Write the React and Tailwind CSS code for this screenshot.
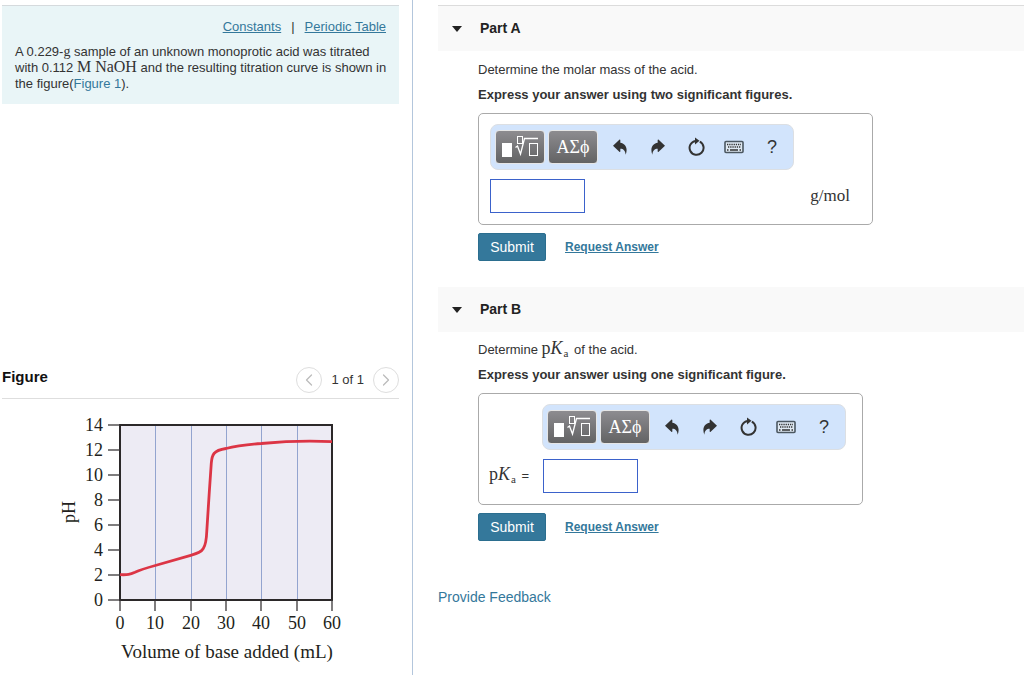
import { useState } from 'react';
import { ChevronLeft, ChevronRight } from 'lucide-react';

const X_TICKS = [0, 10, 20, 30, 40, 50, 60];
const Y_TICKS = [0, 2, 4, 6, 8, 10, 12, 14];

// plot area inside the chart svg
const LEFT = 80;
const RIGHT = 292;
const TOP = 20;
const BOTTOM = 195;

const xPos = (value) => Math.round(LEFT + (value / 60) * (RIGHT - LEFT));
const yPos = (value) => Math.round(BOTTOM - (value / 14) * (BOTTOM - TOP));

function TitrationChart() {
  return (
    <svg width="320" height="264" viewBox="0 0 320 264" className="block font-['Liberation_Serif',serif] text-[18px]" fill="#231f20">
      <title>Titration curve</title>
      <rect x={LEFT} y={TOP} width={RIGHT - LEFT} height={BOTTOM - TOP} fill="#edebf4" />
      {X_TICKS.slice(1, -1).map((tick) => (
        <line key={tick} x1={xPos(tick) + 0.5} x2={xPos(tick) + 0.5} y1={TOP} y2={BOTTOM} stroke="#93a4cf" />
      ))}
      <rect x={LEFT} y={TOP} width={RIGHT - LEFT} height={BOTTOM - TOP} fill="none" stroke="#2b2829" strokeWidth="2" />
      {X_TICKS.map((tick) => (
        <g key={tick}>
          <line x1={xPos(tick)} x2={xPos(tick)} y1={BOTTOM} y2={BOTTOM + 11} stroke="#3a3738" strokeWidth="1.3" />
          <text x={xPos(tick)} y="224" textAnchor="middle">{tick}</text>
        </g>
      ))}
      {Y_TICKS.map((tick) => (
        <g key={tick}>
          <line x1={LEFT - 12} x2={LEFT} y1={yPos(tick)} y2={yPos(tick)} stroke="#3a3738" strokeWidth="1.3" />
          <text x="63" y={yPos(tick) + 6} textAnchor="end">{tick}</text>
        </g>
      ))}
      <path
        d="M80 169.7C88 170 90 169.5 95 167.3C101 164.5 107 162.8 115.3 160.5L150.700 150.300C157 148.500 161 147.500 163.300 143.500C166 139.500 166.500 134 166.800 126L169.300 87L171.300 58C172 50 173 45.500 186 43.500C197 40.500 207 39.500 221.300 38.500C245 36.300 268 35.500 292 36.700"
        fill="none"
        stroke="#dc3545"
        strokeWidth="2.8"
      />
      <text x="187" y="253" textAnchor="middle" className="text-[19px]">Volume of base added (mL)</text>
      <text transform="translate(35 107) rotate(-90)" textAnchor="middle">pH</text>
    </svg>
  );
}

function TemplateIcon() {
  return (
    <svg width="38" height="24" viewBox="0 0 38 24" fill="none" stroke="white">
      <rect x="1" y="8" width="10" height="14" fill="white" stroke="none" />
      <rect x="16.5" y="1.5" width="5" height="7" />
      <path d="M14.5 12.5L16.5 11L19.5 19L23.5 3.5H37" strokeWidth="1.3" />
      <rect x="28.5" y="8.5" width="8" height="12" />
    </svg>
  );
}

function ArrowIcon({ flip }) {
  return (
    <svg width="14" height="16" viewBox="0 0 42 48" className={flip ? '-scale-x-100' : ''} fill="#333">
      <path d="M0 20L19 2C21 1 22 2 22 4V11C36 13 46 26 38 47C37 34 31 29 22 29V37C22 39 21 40 19 38Z" />
    </svg>
  );
}

function ResetIcon() {
  return (
    <svg width="18" height="20" viewBox="0 0 18 20" fill="none">
      <path d="M12.8 4.6A7 7 0 1 1 8.5 3.9" stroke="#333" strokeWidth="2" />
      <path d="M8 0.5L12.5 3.8L8 7.5Z" fill="#333" />
    </svg>
  );
}

function KeyboardIcon() {
  return (
    <svg width="20" height="14" viewBox="0 0 20 14" fill="none">
      <rect x="1" y="1.5" width="18" height="11" rx="1" fill="#dfe9f3" stroke="#4b5761" strokeWidth="1.6" />
      <path d="M3 4.5H17M4 7H17" stroke="#333" strokeWidth="1.4" strokeDasharray="1.3 0.9" />
      <path d="M3 10H4.5M6 10H14M15.5 10H17" stroke="#333" strokeWidth="1.3" />
    </svg>
  );
}

function Toolbar({ className = '' }) {
  const dark =
    'flex h-[34px] w-[50px] items-center justify-center rounded border border-[#e6e6e6] bg-linear-to-b from-[#8d8c90] to-[#636364] text-white';
  const plain = 'flex h-8 w-[38px] items-center justify-center text-[#333]';

  return (
    <div className={`flex h-[46px] w-[304px] items-center rounded-lg border border-[#dcdfe3] bg-[#d2e4fc] pl-[4px] ${className}`}>
      <button type="button" aria-label="Templates" className={dark}>
        <TemplateIcon />
      </button>
      <button type="button" aria-label="Symbols" className={`${dark} mx-[3px] font-['Liberation_Serif',serif] text-[18px]`}>
        ΑΣϕ
      </button>
      <button type="button" aria-label="Undo" className={plain}>
        <ArrowIcon />
      </button>
      <button type="button" aria-label="Redo" className={plain}>
        <ArrowIcon flip />
      </button>
      <button type="button" aria-label="Reset" className={plain}>
        <ResetIcon />
      </button>
      <button type="button" aria-label="Keyboard shortcuts" className={plain}>
        <KeyboardIcon />
      </button>
      <button type="button" aria-label="Help" className={`${plain} text-[18px]`}>
        ?
      </button>
    </div>
  );
}

function PKa() {
  return (
    <span className="mr-[2px] font-['Liberation_Serif',serif] text-[18px] leading-3">
      p<i>K</i>
      <sub className="ml-px text-[11px] leading-3">a</sub>
    </span>
  );
}

function PartHeader({ title, className = '' }) {
  return (
    <h2 className={`flex items-center gap-[18px] bg-[#f9f9f9] pl-[14px] text-[14px] font-bold text-[#222] ${className}`}>
      <svg width="10" height="6" viewBox="0 0 10 6" fill="#222">
        <path d="M0 0H10L5 6Z" />
      </svg>
      {title}
    </h2>
  );
}

function Actions() {
  return (
    <div className="mt-2 flex items-center gap-[19px]">
      <button type="submit" className="h-7 w-[68px] rounded-xs border border-[#2b6e8f] bg-[#34789b] text-[14px] text-white">
        Submit
      </button>
      <a href="#request" className="text-[12px] font-bold text-[#34789b] underline">
        Request Answer
      </a>
    </div>
  );
}

function App() {
  const [molarMass, setMolarMass] = useState('');
  const [pka, setPka] = useState('');

  const handleSubmit = (e) => {
    e.preventDefault();
  };

  const answerInput = 'h-[34px] w-[95px] border border-[#3b62cb] bg-white px-2 outline-none';

  return (
    <div className="flex min-h-screen bg-white font-['Liberation_Sans',Arial,sans-serif] text-[13px] text-[#333]">
      <aside className="w-[413px] shrink-0 border-r border-[#b3c6dc] pt-[5px] pr-[13px] pl-[2px]">
        <div className="border-t border-[#d5dadd] bg-[#e9f5f7] pt-[12px] pr-[5px] pb-[12px] pl-[13px]">
          <div className="flex justify-end gap-[10px] pr-2 leading-[18px]">
            <a href="#constants" className="text-[#34789b] underline">Constants</a>
            <span>|</span>
            <a href="#periodic-table" className="text-[#34789b] underline">Periodic Table</a>
          </div>
          <p className="mt-2 leading-4">
            A 0.229-<span className="font-['Liberation_Serif',serif] text-[14px] leading-3">g</span> sample of an unknown monoprotic acid was titrated
            <br />
            with 0.112 <span className="font-['Liberation_Serif',serif] text-[16px] leading-3">M NaOH</span> and the resulting titration curve is shown in
            <br />
            the figure(<a href="#figure" className="text-[#34789b]">Figure 1</a>).
          </p>
        </div>

        <section id="figure" className="mt-[263px]">
          <div className="flex h-8 items-start justify-between border-b border-[#dedede]">
            <h2 className="text-[15px] leading-5 font-bold text-[#111]">Figure</h2>
            <div className="flex items-center gap-[9px]">
              <button type="button" aria-label="Previous figure" className="flex size-[26px] items-center justify-center rounded-full border border-[#dedede] text-[#bbb]">
                <ChevronLeft size={20} strokeWidth={1.5} />
              </button>
              <span>1 of 1</span>
              <button type="button" aria-label="Next figure" className="flex size-[26px] items-center justify-center rounded-full border border-[#dedede] text-[#bbb]">
                <ChevronRight size={20} strokeWidth={1.5} />
              </button>
            </div>
          </div>
          <div className="mt-[6px] pl-[38px]">
            <TitrationChart />
          </div>
        </section>
      </aside>

      <main className="min-w-0 flex-1 pt-[5px] pl-[25px]">
        <form onSubmit={handleSubmit}>
          <PartHeader title="Part A" className="h-[46px] border-t border-[#dcdcdc]" />
          <div className="pl-10">
            <p className="mt-[9px] leading-5">Determine the molar mass of the acid.</p>
            <p className="mt-[5px] leading-5 font-bold">Express your answer using two significant figures.</p>
            <div className="mt-2 h-[112px] w-[395px] max-w-full rounded-[5px] border border-[#aaa] px-[11px] pt-[10px]">
              <Toolbar />
              <div className="mt-[9px] flex items-center justify-between pr-[11px]">
                <input
                  type="text"
                  aria-label="Molar mass in g/mol"
                  className={answerInput}
                  value={molarMass}
                  onChange={(e) => setMolarMass(e.target.value)}
                />
                <span className="font-['Liberation_Serif',serif] text-[17px]">g/mol</span>
              </div>
            </div>
            <Actions />
          </div>
        </form>

        <form onSubmit={handleSubmit} className="mt-[26px]">
          <PartHeader title="Part B" className="h-[45px]" />
          <div className="pl-10">
            <p className="mt-[8px] leading-5">
              Determine <PKa /> of the acid.
            </p>
            <p className="mt-[5px] leading-5 font-bold">Express your answer using one significant figure.</p>
            <div className="mt-2 h-[112px] w-[385px] max-w-full rounded-[5px] border border-[#aaa] pt-[10px] pr-[11px] pl-[10px]">
              <Toolbar className="ml-[53px]" />
              <div className="mt-[9px] flex items-center">
                <label htmlFor="pka" className="w-[54px]">
                  <PKa /> =
                </label>
                <input
                  id="pka"
                  type="text"
                  className={answerInput}
                  value={pka}
                  onChange={(e) => setPka(e.target.value)}
                />
              </div>
            </div>
            <Actions />
          </div>
        </form>

        <a href="#feedback" className="mt-[46px] inline-block text-[14px] leading-5 text-[#34789b]">
          Provide Feedback
        </a>
      </main>
    </div>
  );
}

export default App;
